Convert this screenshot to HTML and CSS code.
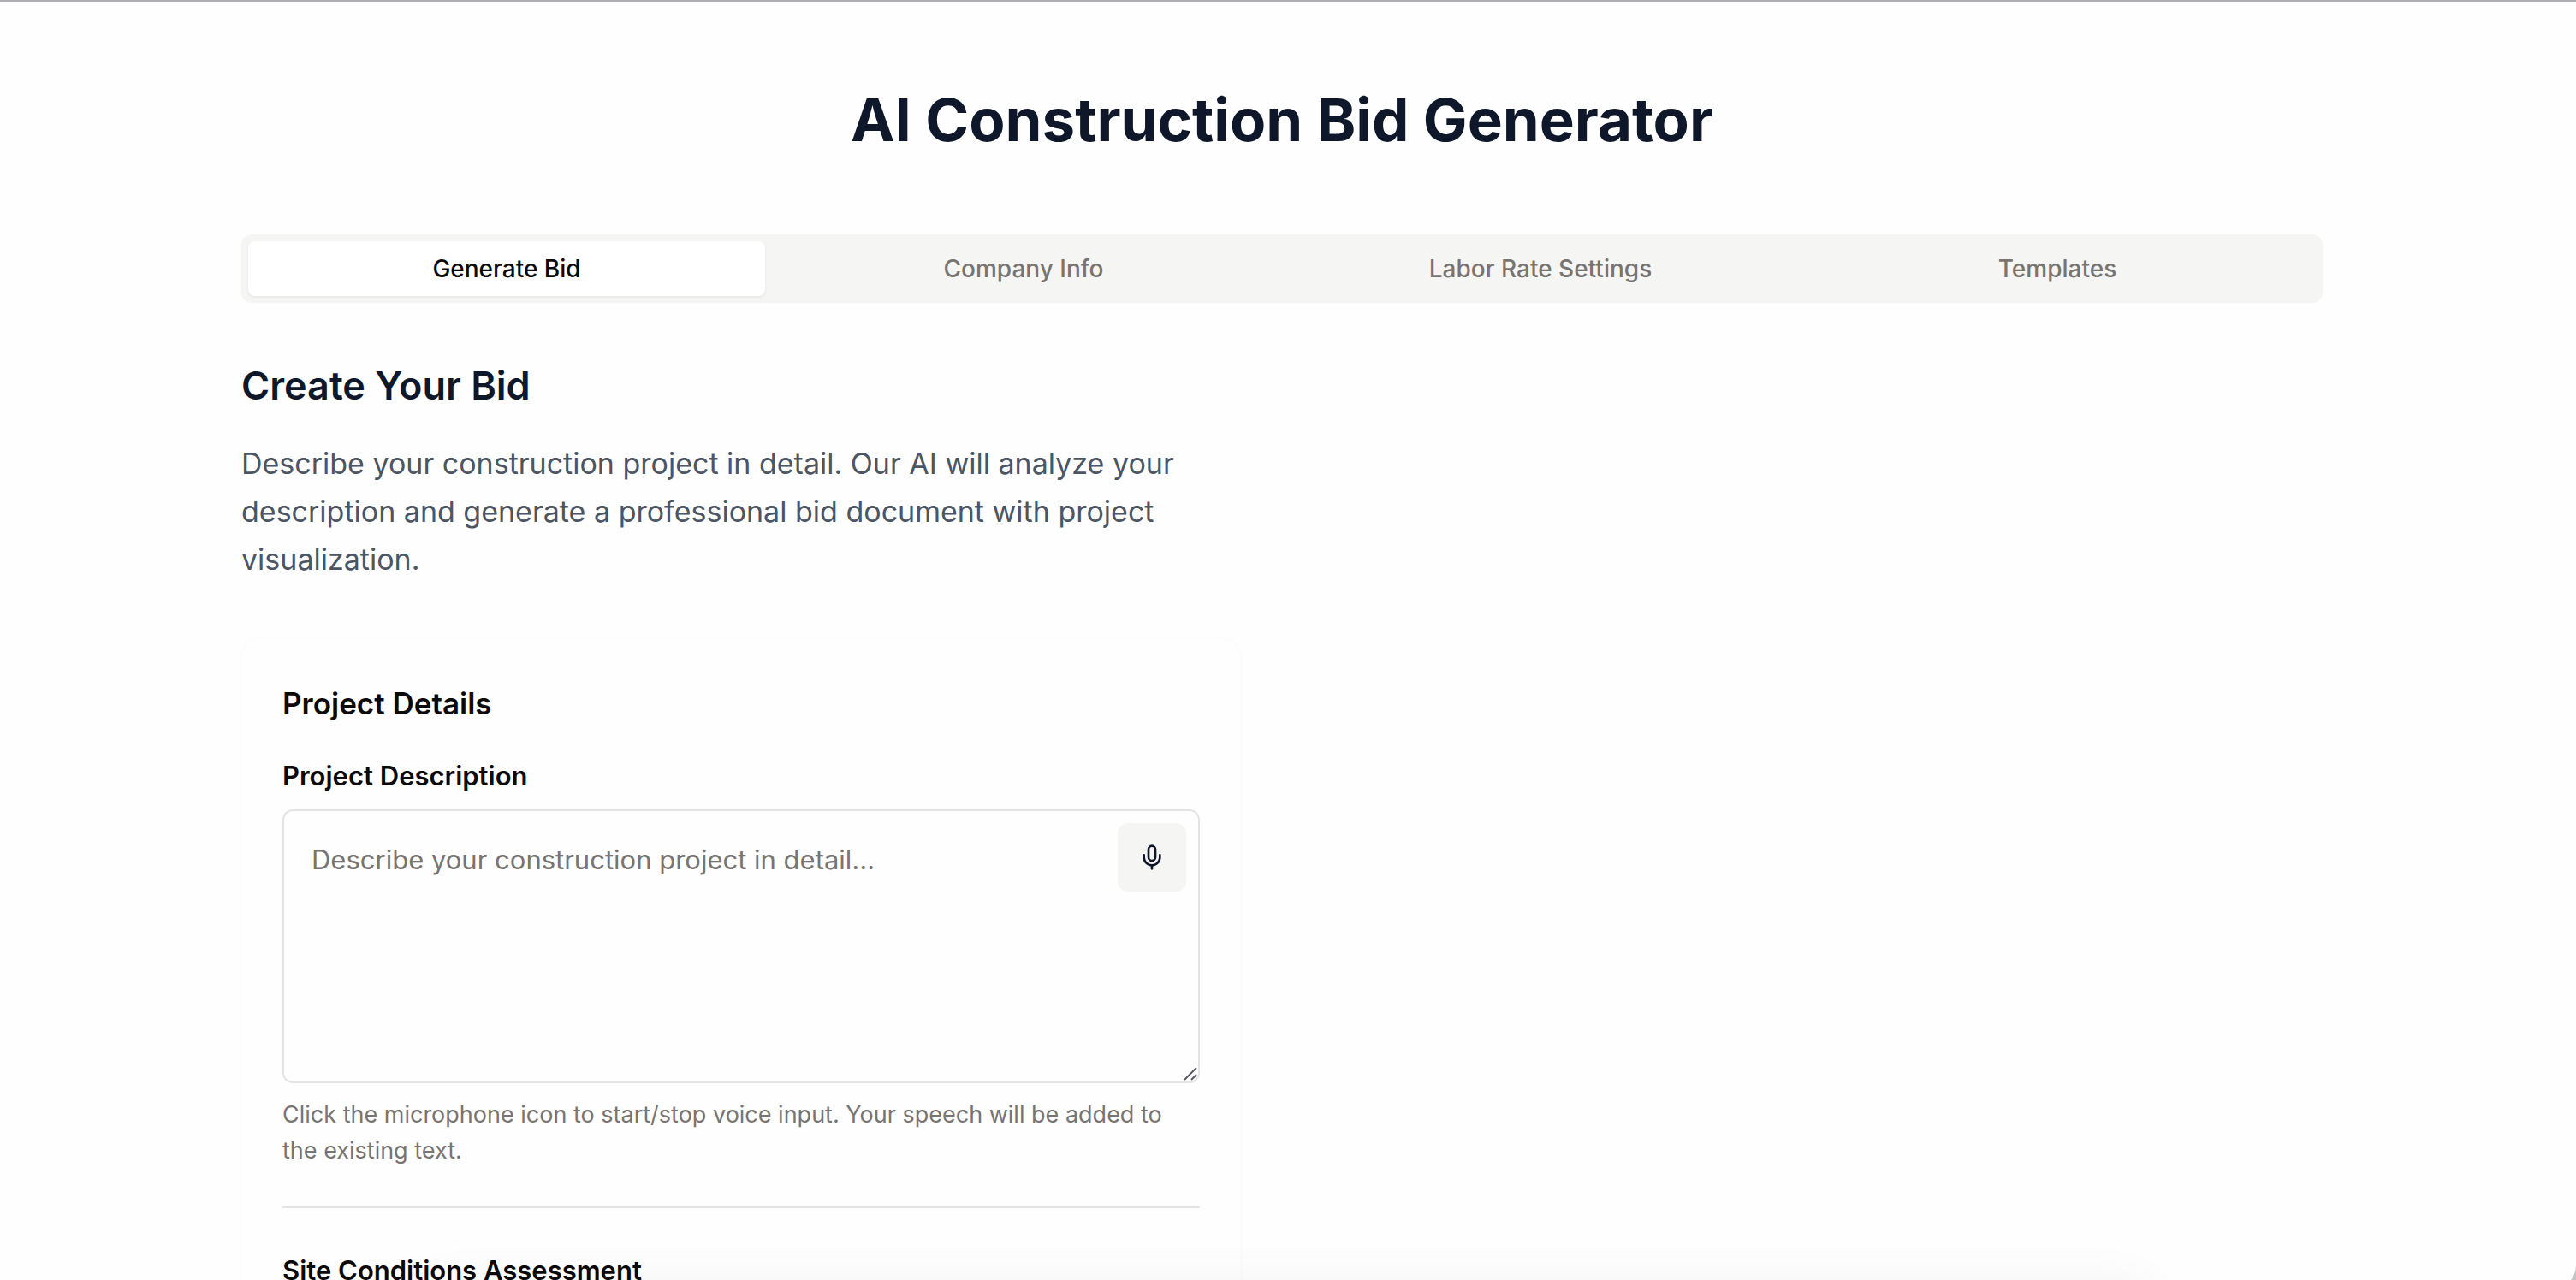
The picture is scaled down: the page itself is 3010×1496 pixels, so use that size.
FILE: index.html
```html
<!DOCTYPE html>
<html lang="en">
<head>
<meta charset="utf-8">
<meta name="viewport" content="width=device-width, initial-scale=1">
<title>AI Construction Bid Generator</title>
<link rel="stylesheet" href="styles.css">
</head>
<body>
<main class="container">
  <h1 class="page-title">AI Construction Bid Generator</h1>
  <div class="tabs" role="tablist">
    <button class="tab tab-active" type="button" role="tab" aria-selected="true">Generate Bid</button>
    <button class="tab" type="button" role="tab" aria-selected="false">Company Info</button>
    <button class="tab" type="button" role="tab" aria-selected="false">Labor Rate Settings</button>
    <button class="tab" type="button" role="tab" aria-selected="false">Templates</button>
  </div>
  <div class="columns">
    <section class="bid">
      <h2 class="section-title">Create Your Bid</h2>
      <p class="intro">Describe your construction project in detail. Our AI will analyze your description and generate a professional bid document with project visualization.</p>
      <form class="card">
        <h3 class="card-title">Project Details</h3>
        <label class="label" for="description">Project Description</label>
        <div class="field">
          <textarea class="textarea" id="description" placeholder="Describe your construction project in detail..."></textarea>
          <button class="mic" type="button" aria-label="Voice input">
            <svg class="mic-icon" viewBox="0 0 24 24" fill="none" stroke="currentColor" stroke-width="2" stroke-linecap="round" stroke-linejoin="round"><path d="M12 2a3 3 0 0 0-3 3v7a3 3 0 0 0 6 0V5a3 3 0 0 0-3-3Z"/><path d="M19 10v2a7 7 0 0 1-14 0v-2"/><path d="M12 19v3"/></svg>
          </button>
          <svg class="grip" viewBox="0 0 18 18" fill="none" stroke="currentColor" stroke-width="2" aria-hidden="true"><path d="M2 16 16 2M10 16l6-6"/></svg>
        </div>
        <p class="hint">Click the microphone icon to start/stop voice input. Your speech will be added to the existing text.</p>
        <hr class="divider">
        <h4 class="group-title">Site Conditions Assessment</h4>
      </form>
    </section>
  </div>
</main>
<div class="dock"></div>
<svg class="corner" viewBox="0 0 6 18" aria-hidden="true"><path d="M6 2Q5 12 0 18H6Z" fill="#c4c4c4"/></svg>
</body>
</html>
```
FILE: styles.css
```css
* {
  box-sizing: border-box;
  margin: 0;
}

html {
  height: 100%;
  overflow: hidden;
  background: #fefefe;
}

body {
  height: 100%;
  overflow: hidden;
  padding-right: 14px;
  border-top: 2px solid #b0aeb3;
  color: #0c0a09;
  font-family: Inter, "Liberation Sans", sans-serif;
}

button,
textarea {
  font: inherit;
}

.container {
  max-width: 2560px;
  margin: 0 auto;
  padding: 96px 64px;
}

.page-title {
  margin-bottom: 92px;
  color: #0f172a;
  font-size: 69px;
  font-weight: 700;
  line-height: 84px;
  text-align: center;
}

.tabs {
  display: grid;
  grid-template-columns: repeat(4, 1fr);
  height: 80px;
  padding: 8px;
  border-radius: 12px;
  background: #f5f5f4;
}

.tab {
  border: 0;
  border-radius: 8px;
  background: none;
  color: #787471;
  font-size: 28px;
  font-weight: 500;
}

.tab-active {
  background: #fff;
  box-shadow: 0 2px 4px rgba(0, 0, 0, 0.06);
  color: #0c0a09;
}

.columns {
  display: grid;
  grid-template-columns: repeat(2, 1fr);
  gap: 96px;
  margin-top: 64px;
}

.section-title {
  margin-bottom: 30px;
  color: #0f172a;
  font-size: 45px;
  font-weight: 600;
  line-height: 66px;
}

.intro {
  color: #4b5563;
  font-size: 34px;
  line-height: 56px;
}

.card {
  margin-top: 64px;
  padding: 48px;
  border-radius: 24px;
  box-shadow: 0 0 4px rgba(0, 0, 0, 0.03);
}

.card-title {
  margin-bottom: 32px;
  font-size: 35px;
  font-weight: 600;
  line-height: 56px;
}

.label {
  display: block;
  margin-bottom: 14px;
  font-size: 31px;
  font-weight: 600;
  line-height: 50px;
}

.field {
  display: flex;
  position: relative;
}

.textarea {
  width: 100%;
  height: 320px;
  padding: 32px 112px 32px 32px;
  border: 2px solid #e4e4e4;
  border-radius: 12px;
  outline: 0;
  background: none;
  font-size: 31px;
  line-height: 50px;
  resize: vertical;
}

.textarea::-webkit-resizer {
  background: none;
}

.textarea::placeholder {
  color: #787471;
  opacity: 1;
}

.mic {
  display: flex;
  position: absolute;
  top: 16px;
  right: 16px;
  align-items: center;
  justify-content: center;
  width: 80px;
  height: 80px;
  padding: 0;
  border: 0;
  border-radius: 12px;
  background: #f5f5f4;
  color: #0f172a;
}

.mic-icon {
  width: 32px;
  height: 32px;
}

.grip {
  position: absolute;
  right: 2px;
  bottom: 2px;
  width: 18px;
  height: 18px;
  color: #5c5a66;
  pointer-events: none;
}

.hint {
  margin-top: 16px;
  color: #787471;
  font-size: 27px;
  line-height: 42px;
}

.divider {
  height: 2px;
  margin: 44px 0 48px;
  border: 0;
  background: #e4e4e4;
}

.group-title {
  font-size: 31px;
  font-weight: 600;
  line-height: 50px;
}

.dock {
  position: fixed;
  right: 500px;
  bottom: -100px;
  left: 500px;
  height: 98px;
  border-radius: 24px;
  box-shadow: 0 0 56px rgba(0, 0, 0, 0.05);
}

.corner {
  position: fixed;
  right: 0;
  bottom: 0;
  width: 6px;
  height: 18px;
}
```
